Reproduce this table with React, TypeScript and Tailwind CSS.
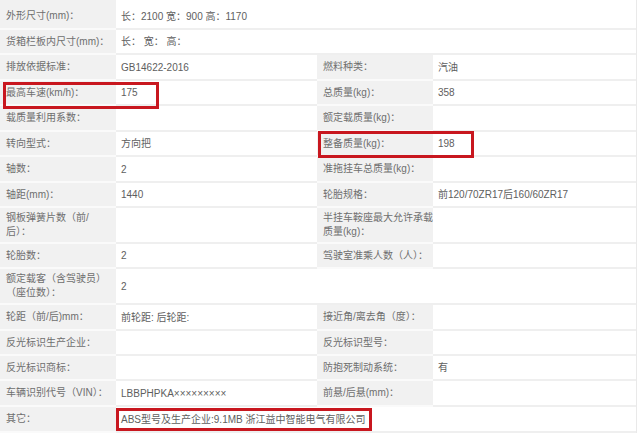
const font = { fontFamily: '"Liberation Sans", "Noto Sans CJK SC", sans-serif' }

type RowProps = {
    h: string
    label: React.ReactNode
    value?: React.ReactNode
    label2?: React.ReactNode
    value2?: React.ReactNode
    wide?: boolean
}

const labelCls = 'flex items-center pl-[6px] bg-[#f1f1f1] border-b-2 border-[#fafafa] text-[#6e6e6e] leading-[14px] whitespace-nowrap'
const valueCls = 'flex items-center pl-[5px] bg-white border-b-2 border-[#efefef] text-[#5e5e5e] whitespace-nowrap'

const Row = ({ h, label, value, label2, value2, wide }: RowProps) => (
    <div className={`grid grid-cols-[116px_201px_116px_203px] ${h}`}>
        <div className={labelCls}>{label}</div>
        {wide ? (
            <div className={`${valueCls} col-span-3`}>{value}</div>
        ) : (
            <>
                <div className={valueCls}>{value}</div>
                <div className={`${labelCls} pl-[4px]`}>{label2}</div>
                <div className={valueCls}>{value2}</div>
            </>
        )}
    </div>
)

export default function App() {
    return (
        <div className="relative w-[640px] h-[434px] bg-white overflow-hidden text-[10px]" style={font}>
            <div className="w-[637px] border-r border-[#e9e9e9] flex flex-col">
                <Row h="h-[30px]" wide label={<span className="pt-[4px]">外形尺寸(mm)：</span>} value={<span className="pt-[4px]">长：2100 宽：900 高：1170</span>} />
                <Row h="h-[25px]" wide label="货箱栏板内尺寸(mm)：" value="长： 宽： 高：" />
                <Row h="h-[26px]" label="排放依据标准：" value="GB14622-2016" label2="燃料种类：" value2="汽油" />
                <Row h="h-[25px]" label="最高车速(km/h)：" value="175" label2="总质量(kg)：" value2="358" />
                <Row h="h-[26px]" label="载质量利用系数：" label2="额定载质量(kg)：" />
                <Row h="h-[25px]" label="转向型式：" value="方向把" label2="整备质量(kg)：" value2="198" />
                <Row h="h-[26px]" label="轴数：" value="2" label2="准拖挂车总质量(kg)：" />
                <Row h="h-[25px]" label="轴距(mm)：" value="1440" label2="轮胎规格：" value2="前120/70ZR17后160/60ZR17" />
                <Row
                    h="h-[36px]"
                    label={<span>钢板弹簧片数（前/<br />后）：</span>}
                    label2={<span>半挂车鞍座最大允许承载<br />质量(kg)：</span>}
                />
                <Row h="h-[25px]" label="轮胎数：" value="2" label2="驾驶室准乘人数（人）：" />
                <Row h="h-[36px]" wide label={<span>额定载客（含驾驶员）<br />（座位数）：</span>} value="2" />
                <Row h="h-[26px]" label="轮距（前/后)mm：" value="前轮距: 后轮距:" label2="接近角/离去角（度）：" />
                <Row h="h-[25px]" label="反光标识生产企业：" label2="反光标识型号：" />
                <Row h="h-[25px]" label="反光标识商标：" label2="防抱死制动系统：" value2="有" />
                <Row h="h-[26px]" label="车辆识别代号（VIN）：" value="LBBPHPKA×××××××××" label2="前悬/后悬(mm)：" />
                <Row h="h-[26px]" wide label="其它：" value="ABS型号及生产企业:9.1MB 浙江益中智能电气有限公司" />
            </div>

            {/* red annotation boxes */}
            <div className="absolute left-[3px] top-[82px] w-[156px] h-[27px] border-[3px] border-[#c8171f]" />
            <div className="absolute left-[318px] top-[131px] w-[156px] h-[27px] border-[3px] border-[#c8171f]" />
            <div className="absolute left-[116px] top-[408px] w-[256px] h-[23px] border-[3px] border-[#c8171f]" />
        </div>
    )
}
